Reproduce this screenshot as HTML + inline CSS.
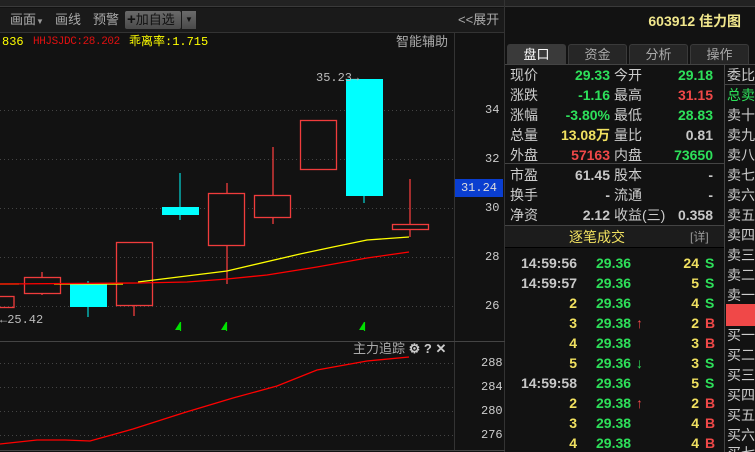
<!DOCTYPE html>
<html><head><meta charset="utf-8"><style>
*{margin:0;padding:0;box-sizing:border-box}
html{width:755px;height:452px;overflow:hidden}
body{width:755px;height:452px;background:#121212;overflow:hidden;position:relative;font-family:"Liberation Sans","Noto Sans CJK SC",sans-serif;font-size:13px;color:#ccc}
.a{position:absolute;white-space:nowrap;line-height:16px}
.m{font-family:"Liberation Mono","Noto Sans CJK SC",monospace}
.g{color:#2de05a}.r{color:#f04848}.y{color:#f0e060}.w{color:#c8c8c8}
.b{font-weight:bold}
.tab{position:absolute;top:44px;height:20px;width:59px;background:#262626;border:1px solid #3a3a3a;border-bottom:none;border-radius:3px 3px 0 0;text-align:center;line-height:19px;color:#aaa;font-size:13px}
</style></head><body>
<div class="a" style="left:0;top:0;width:755px;height:7px;background:#222;border-bottom:1px solid #3a3a3a"></div>
<div class="a" style="left:0;top:8px;width:505px;height:25px;background:#1a1a1a;border-bottom:1px solid #333"></div>
<div class="a" style="left:10px;top:12px;color:#aaa">画面<span style="font-size:8px;color:#999">▼</span></div>
<div class="a" style="left:55px;top:12px;color:#aaa">画线</div>
<div class="a" style="left:93px;top:12px;color:#aaa">预警</div>
<div class="a" style="left:125px;top:11px;width:56px;height:18px;background:linear-gradient(#6a6a6a,#4a4a4a);border-radius:2px;color:#111;line-height:18px;padding-left:2px"><b style="font-size:15px">+</b>加自选</div>
<div class="a" style="left:182px;top:11px;width:14px;height:18px;background:linear-gradient(#6a6a6a,#4a4a4a);color:#111;font-size:8px;line-height:18px;text-align:center">▼</div>
<div class="a" style="left:458px;top:12px;color:#aaa">&lt;&lt;展开</div>
<div class="a" style="left:454px;top:33px;width:1px;height:417px;background:#333"></div>
<div class="a" style="left:504px;top:0;width:1px;height:452px;background:#333"></div>
<div class="a m" style="left:2px;top:34px;font-size:12px;color:#ff0">836</div>
<div class="a m" style="left:33px;top:34px;font-size:11px;letter-spacing:-0.4px;color:#e01010">HHJSJDC:28.202</div>
<div class="a m" style="left:129px;top:34px;font-size:12px;color:#ff0">乖离率:1.715</div>
<div class="a" style="left:396px;top:34px;color:#aaa">智能辅助</div>
<svg class="a" style="left:0;top:0" width="505" height="452">
<g stroke="#444" stroke-dasharray="1,3" stroke-width="1">
<line x1="0" y1="110.5" x2="454" y2="110.5"/><line x1="0" y1="159.5" x2="454" y2="159.5"/><line x1="0" y1="208.5" x2="454" y2="208.5"/><line x1="0" y1="257.5" x2="454" y2="257.5"/><line x1="0" y1="306.5" x2="454" y2="306.5"/>
<line x1="0" y1="363.5" x2="454" y2="363.5"/><line x1="0" y1="387.5" x2="454" y2="387.5"/><line x1="0" y1="411.5" x2="454" y2="411.5"/><line x1="0" y1="435.5" x2="454" y2="435.5"/>
</g>
<line x1="0" y1="341.5" x2="505" y2="341.5" stroke="#444"/>
<line x1="0" y1="450.5" x2="505" y2="450.5" stroke="#444"/>
<g stroke="#f03c3c" fill="none" stroke-width="1.3">
<rect x="-1" y="296.5" width="15" height="11"/>
<line x1="42" y1="272" x2="42" y2="295"/><rect x="24.5" y="277.5" width="36" height="16" fill="#121212"/>
<line x1="134" y1="305" x2="134" y2="316"/><rect x="116.5" y="242.5" width="36" height="63"/>
<line x1="227" y1="183" x2="227" y2="284"/><rect x="208.5" y="193.5" width="36" height="52" fill="#121212"/>
<line x1="273" y1="147" x2="273" y2="224"/><rect x="254.5" y="195.5" width="36" height="22" fill="#121212"/>
<rect x="300.5" y="120.5" width="36" height="49"/>
<line x1="410" y1="179" x2="410" y2="237"/><rect x="392.5" y="224.5" width="36" height="5" fill="#121212"/>
</g>
<g fill="#00ffff" stroke="#00ffff">
<line x1="88" y1="281" x2="88" y2="317"/><rect x="70" y="284" width="37" height="23" stroke="none"/>
<line x1="180" y1="173" x2="180" y2="220"/><rect x="162" y="207" width="37" height="8" stroke="none"/>
<line x1="364" y1="190" x2="364" y2="203"/><rect x="346" y="79" width="37" height="117" stroke="none"/>
</g>
<polyline fill="none" stroke="#ff0" stroke-width="1.3" points="0,284 19,284"/>
<polyline fill="none" stroke="#ff0" stroke-width="1.3" points="54,284 123,284"/>
<polyline fill="none" stroke="#ff0" stroke-width="1.3" points="138,282 227,271 300,254 333,247 367,240 409,237"/>
<polyline fill="none" stroke="#f00" stroke-width="1.3" points="0,284 138,283 187,282 227,279 267,275 317,267 367,258 409,252"/>
<polyline fill="none" stroke="#f00" stroke-width="1.3" points="0,444 37,440 65,440 90,441 133,429 183,413 233,398 277,386 317,370 367,361 409,357"/>
<g fill="#00e000"><path d="M175,330 L180,322 L180,330 Z"/><path d="M221,330 L226,322 L226,330 Z"/><path d="M359,330 L364,322 L364,330 Z"/></g>
<g stroke="#00e000" stroke-width="1.2"><line x1="180.5" y1="322" x2="180.5" y2="331"/><line x1="226.5" y1="322" x2="226.5" y2="331"/><line x1="364.5" y1="322" x2="364.5" y2="331"/></g>
</svg>
<div class="a m" style="left:316px;top:70px;font-size:12px;color:#bbb">35.23→</div>
<div class="a m" style="left:0;top:312px;font-size:12px;color:#bbb">←25.42</div>
<div class="a m" style="left:455px;top:179px;width:48px;height:18px;background:#0a3ed0;color:#ddd;text-align:center;line-height:18px;font-size:12px">31.24</div>
<div class="a m" style="left:485px;top:102px;font-size:12px;color:#ccc">34</div>
<div class="a m" style="left:485px;top:151px;font-size:12px;color:#ccc">32</div>
<div class="a m" style="left:485px;top:200px;font-size:12px;color:#ccc">30</div>
<div class="a m" style="left:485px;top:249px;font-size:12px;color:#ccc">28</div>
<div class="a m" style="left:485px;top:298px;font-size:12px;color:#ccc">26</div>
<div class="a" style="left:353px;top:341px;color:#aaa">主力追踪 <b style="color:#ccc">⚙ ? ✕</b></div>
<div class="a m" style="left:481px;top:355px;font-size:12px;color:#ccc">288</div>
<div class="a m" style="left:481px;top:379px;font-size:12px;color:#ccc">284</div>
<div class="a m" style="left:481px;top:403px;font-size:12px;color:#ccc">280</div>
<div class="a m" style="left:481px;top:427px;font-size:12px;color:#ccc">276</div>

<div class="a b" style="left:600px;top:13px;width:141px;text-align:right;color:#f0e68c;font-size:14px">603912 佳力图</div>
<div class="tab" style="left:507px;background:#3a3a3a;color:#fff">盘口</div>
<div class="tab" style="left:568px">资金</div>
<div class="tab" style="left:629px">分析</div>
<div class="tab" style="left:690px">操作</div>
<div class="a" style="left:505px;top:64px;width:250px;height:1px;background:#444"></div>
<div class="a" style="left:724px;top:65px;width:1px;height:387px;background:#444"></div>
<div class="a" style="left:505px;top:163px;width:219px;height:1px;background:#444"></div>
<div class="a" style="left:505px;top:225px;width:219px;height:1px;background:#444"></div>
<div class="a" style="left:505px;top:226px;width:219px;height:22px;background:#1c1c1c;border-bottom:1px solid #000"></div>
<div class="a" style="left:724px;top:84px;width:31px;height:1px;background:#444"></div>
<div style="position:absolute;left:0;top:0;width:755px;height:452px;overflow:hidden;font-size:14px">
<div class="a" style="left:510px;top:67px">现价</div><div class="a b g" style="left:540px;top:67px;width:70px;text-align:right">29.33</div><div class="a" style="left:614px;top:67px">今开</div><div class="a b g" style="left:650px;top:67px;width:63px;text-align:right">29.18</div>
<div class="a" style="left:510px;top:87px">涨跌</div><div class="a b g" style="left:540px;top:87px;width:70px;text-align:right">-1.16</div><div class="a" style="left:614px;top:87px">最高</div><div class="a b r" style="left:650px;top:87px;width:63px;text-align:right">31.15</div>
<div class="a" style="left:510px;top:107px">涨幅</div><div class="a b g" style="left:540px;top:107px;width:70px;text-align:right">-3.80%</div><div class="a" style="left:614px;top:107px">最低</div><div class="a b g" style="left:650px;top:107px;width:63px;text-align:right">28.83</div>
<div class="a" style="left:510px;top:127px">总量</div><div class="a b y" style="left:540px;top:127px;width:70px;text-align:right">13.08万</div><div class="a" style="left:614px;top:127px">量比</div><div class="a b w" style="left:650px;top:127px;width:63px;text-align:right">0.81</div>
<div class="a" style="left:510px;top:147px">外盘</div><div class="a b r" style="left:540px;top:147px;width:70px;text-align:right">57163</div><div class="a" style="left:614px;top:147px">内盘</div><div class="a b g" style="left:650px;top:147px;width:63px;text-align:right">73650</div>
<div class="a" style="left:510px;top:167px">市盈</div><div class="a b w" style="left:540px;top:167px;width:70px;text-align:right">61.45</div><div class="a" style="left:614px;top:167px">股本</div><div class="a b w" style="left:650px;top:167px;width:63px;text-align:right">-</div>
<div class="a" style="left:510px;top:187px">换手</div><div class="a b w" style="left:540px;top:187px;width:70px;text-align:right">-</div><div class="a" style="left:614px;top:187px">流通</div><div class="a b w" style="left:650px;top:187px;width:63px;text-align:right">-</div>
<div class="a" style="left:510px;top:207px">净资</div><div class="a b w" style="left:540px;top:207px;width:70px;text-align:right">2.12</div><div class="a" style="left:614px;top:207px">收益(三)</div><div class="a b w" style="left:650px;top:207px;width:63px;text-align:right">0.358</div>
<div class="a" style="left:727px;top:67px">委比</div><div class="a g" style="left:727px;top:87px">总卖</div>
<div class="a" style="left:727px;top:107px">卖十</div><div class="a" style="left:727px;top:127px">卖九</div><div class="a" style="left:727px;top:147px">卖八</div><div class="a" style="left:727px;top:167px">卖七</div><div class="a" style="left:727px;top:187px">卖六</div><div class="a" style="left:727px;top:207px">卖五</div><div class="a" style="left:727px;top:227px">卖四</div><div class="a" style="left:727px;top:247px">卖三</div><div class="a" style="left:727px;top:267px">卖二</div><div class="a" style="left:727px;top:287px">卖一</div>
<div class="a" style="left:726px;top:304px;width:29px;height:22px;background:#f04848"></div>
<div class="a" style="left:727px;top:327px">买一</div><div class="a" style="left:727px;top:347px">买二</div><div class="a" style="left:727px;top:367px">买三</div><div class="a" style="left:727px;top:387px">买四</div><div class="a" style="left:727px;top:407px">买五</div><div class="a" style="left:727px;top:427px">买六</div><div class="a" style="left:727px;top:445px">买七</div>
<div class="a y" style="left:569px;top:229px">逐笔成交</div><div class="a" style="left:690px;top:229px;color:#999;font-size:12px">[详]</div>
<div class="a b w" style="left:505px;top:255px;width:72px;text-align:right">14:59:56</div><div class="a b g" style="left:596px;top:255px">29.36</div><div class="a b y" style="left:660px;top:255px;width:39px;text-align:right">24</div><div class="a b g" style="left:705px;top:255px">S</div>
<div class="a b w" style="left:505px;top:275px;width:72px;text-align:right">14:59:57</div><div class="a b g" style="left:596px;top:275px">29.36</div><div class="a b y" style="left:660px;top:275px;width:39px;text-align:right">5</div><div class="a b g" style="left:705px;top:275px">S</div>
<div class="a b y" style="left:505px;top:295px;width:72px;text-align:right">2</div><div class="a b g" style="left:596px;top:295px">29.36</div><div class="a b y" style="left:660px;top:295px;width:39px;text-align:right">4</div><div class="a b g" style="left:705px;top:295px">S</div>
<div class="a b y" style="left:505px;top:315px;width:72px;text-align:right">3</div><div class="a b g" style="left:596px;top:315px">29.38</div><div class="a b r" style="left:636px;top:315px">↑</div><div class="a b y" style="left:660px;top:315px;width:39px;text-align:right">2</div><div class="a b r" style="left:705px;top:315px">B</div>
<div class="a b y" style="left:505px;top:335px;width:72px;text-align:right">4</div><div class="a b g" style="left:596px;top:335px">29.38</div><div class="a b y" style="left:660px;top:335px;width:39px;text-align:right">3</div><div class="a b r" style="left:705px;top:335px">B</div>
<div class="a b y" style="left:505px;top:355px;width:72px;text-align:right">5</div><div class="a b g" style="left:596px;top:355px">29.36</div><div class="a b g" style="left:636px;top:355px">↓</div><div class="a b y" style="left:660px;top:355px;width:39px;text-align:right">3</div><div class="a b g" style="left:705px;top:355px">S</div>
<div class="a b w" style="left:505px;top:375px;width:72px;text-align:right">14:59:58</div><div class="a b g" style="left:596px;top:375px">29.36</div><div class="a b y" style="left:660px;top:375px;width:39px;text-align:right">5</div><div class="a b g" style="left:705px;top:375px">S</div>
<div class="a b y" style="left:505px;top:395px;width:72px;text-align:right">2</div><div class="a b g" style="left:596px;top:395px">29.38</div><div class="a b r" style="left:636px;top:395px">↑</div><div class="a b y" style="left:660px;top:395px;width:39px;text-align:right">2</div><div class="a b r" style="left:705px;top:395px">B</div>
<div class="a b y" style="left:505px;top:415px;width:72px;text-align:right">3</div><div class="a b g" style="left:596px;top:415px">29.38</div><div class="a b y" style="left:660px;top:415px;width:39px;text-align:right">4</div><div class="a b r" style="left:705px;top:415px">B</div>
<div class="a b y" style="left:505px;top:435px;width:72px;text-align:right">4</div><div class="a b g" style="left:596px;top:435px">29.38</div><div class="a b y" style="left:660px;top:435px;width:39px;text-align:right">4</div><div class="a b r" style="left:705px;top:435px">B</div>
</div>
</body></html>
